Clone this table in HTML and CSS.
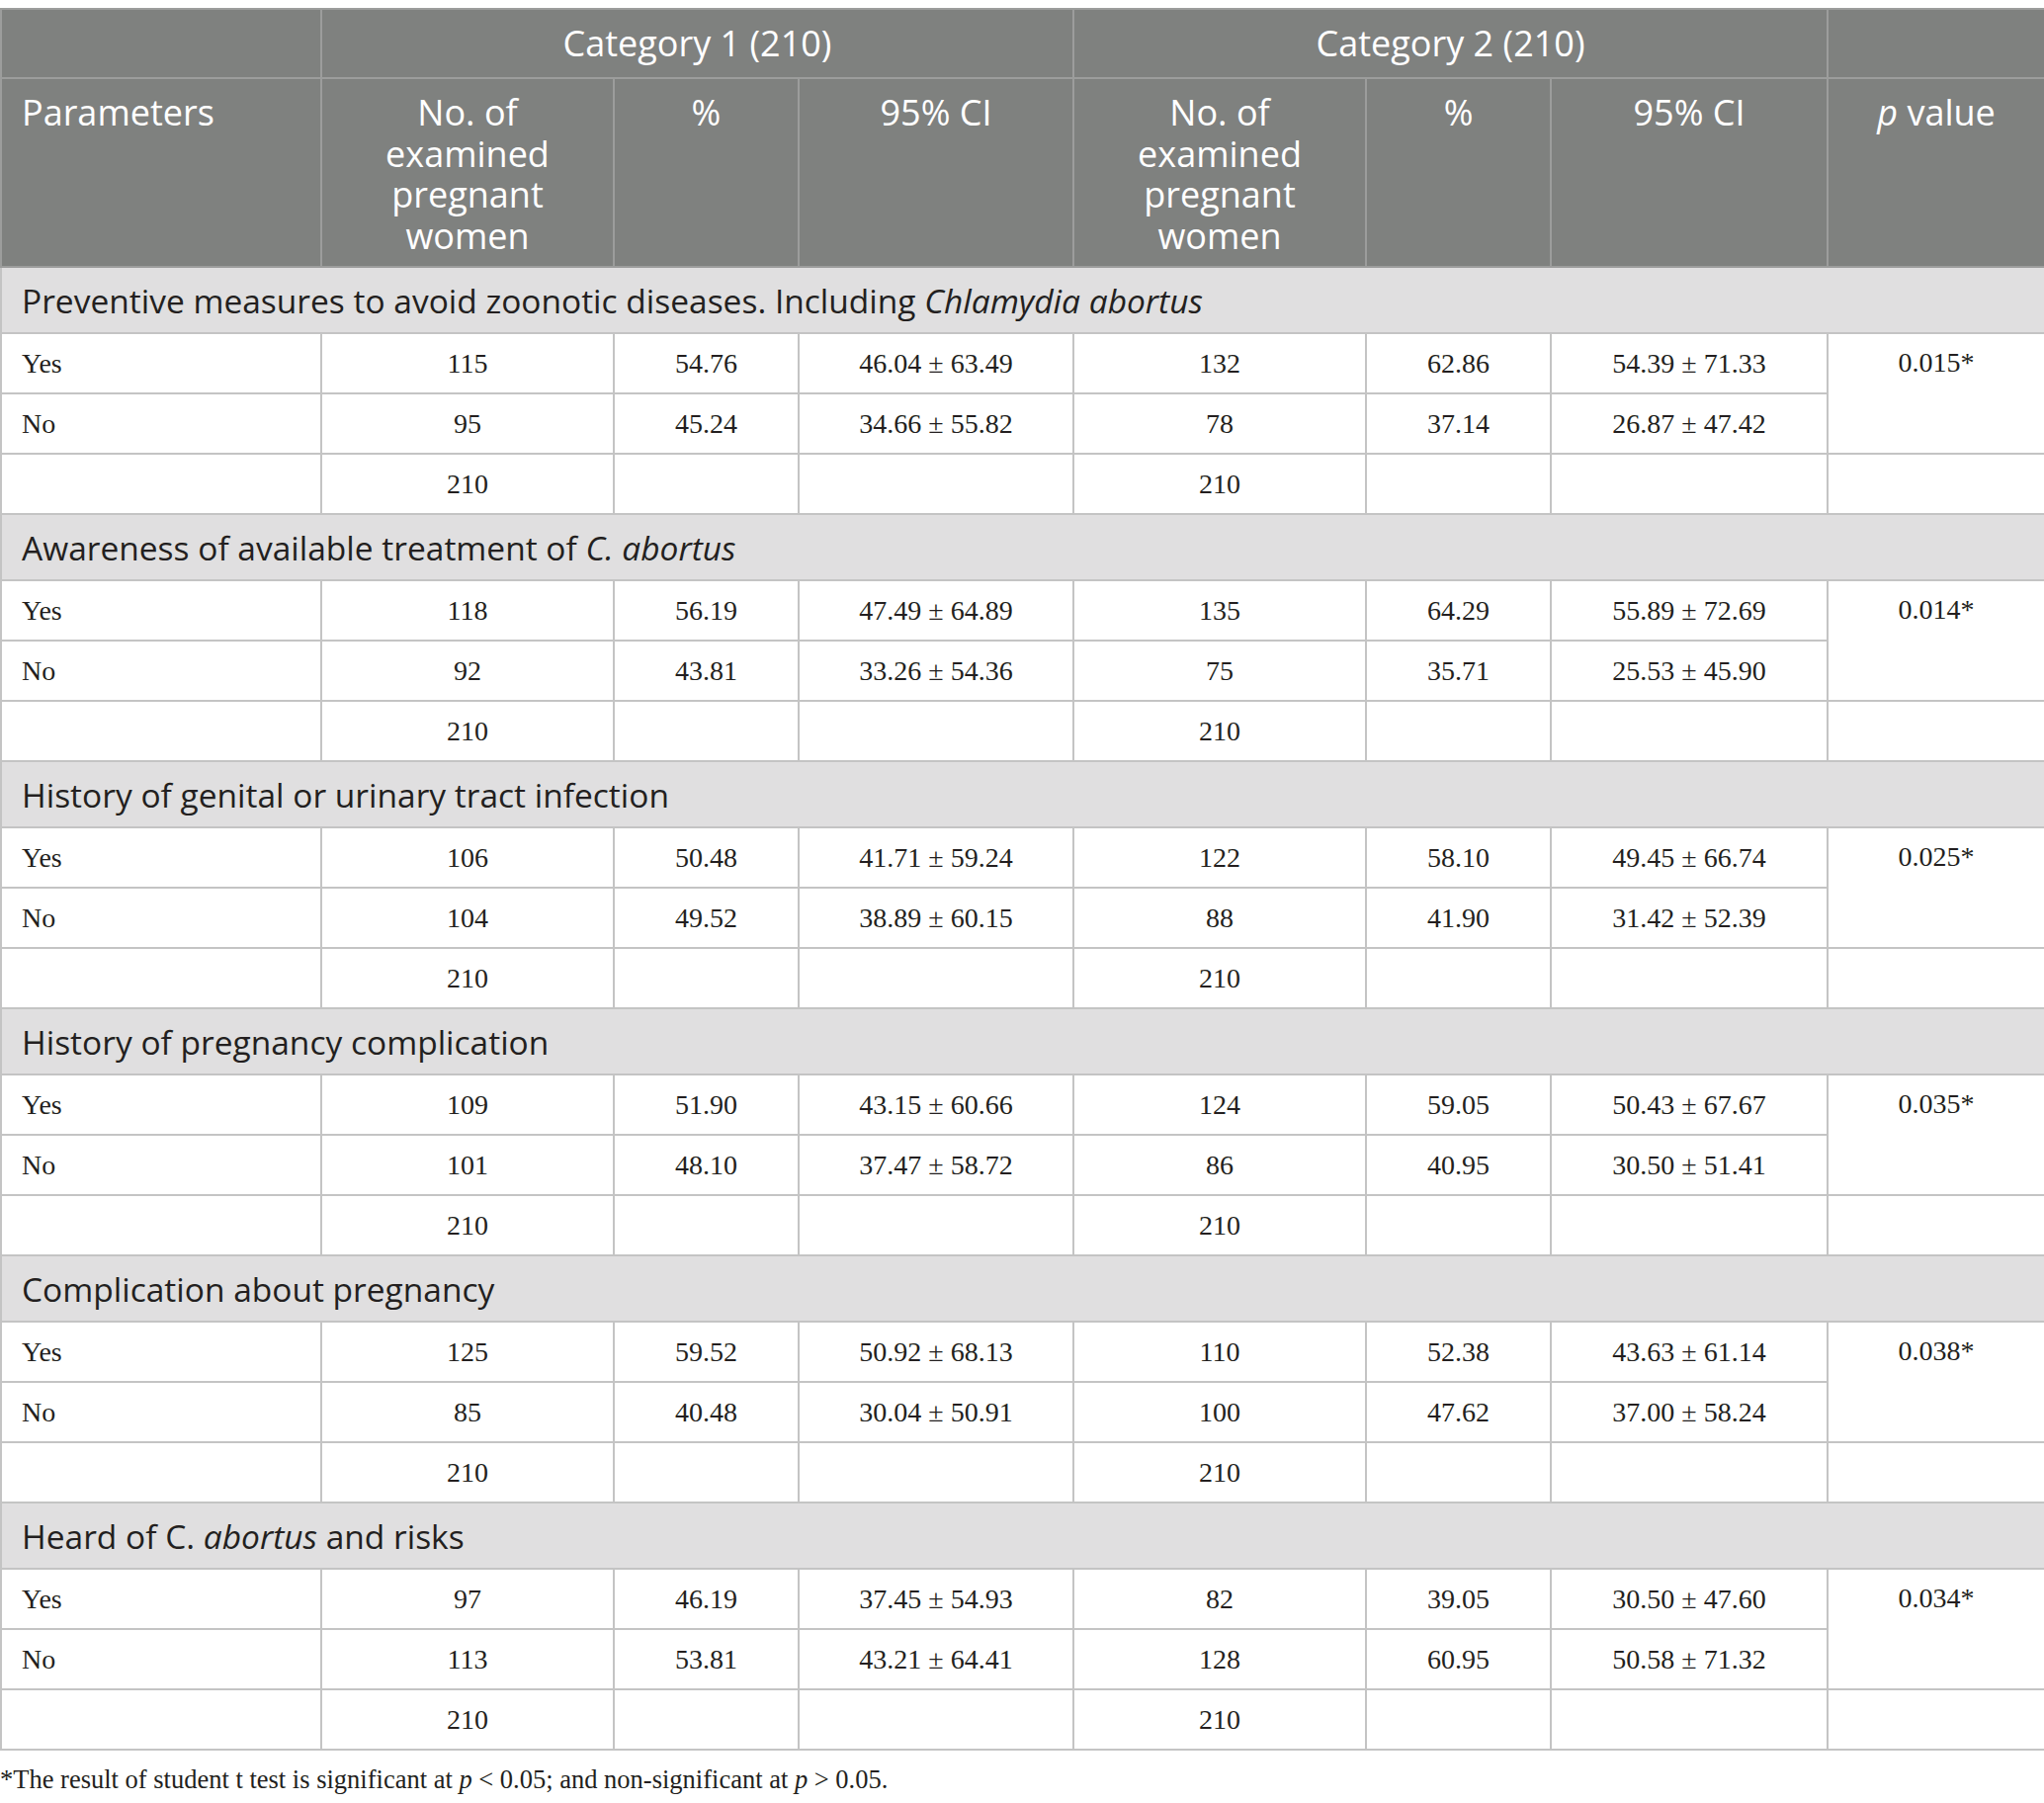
FILE: index.html
```html
<!DOCTYPE html>
<html lang="en">
<head>
  <meta charset="UTF-8" />
  <meta name="viewport" content="width=device-width, initial-scale=1.0"/>
  <title>Awareness of C. abortus among pregnant women</title>
  <link rel="stylesheet" href="styles.css">
</head>
<body>
  <table class="stats">
    <colgroup>
      <col style="width:324px">
      <col style="width:296px">
      <col style="width:187px">
      <col style="width:278px">
      <col style="width:296px">
      <col style="width:187px">
      <col style="width:280px">
      <col style="width:220px">
    </colgroup>
    <thead>
      <tr class="head-top">
        <th></th>
        <th colspan="3">Category 1 (210)</th>
        <th colspan="3">Category 2 (210)</th>
        <th></th>
      </tr>
      <tr class="head-sub">
        <th class="left">Parameters</th>
        <th>No. of examined pregnant women</th>
        <th>%</th>
        <th>95% CI</th>
        <th>No. of examined pregnant women</th>
        <th>%</th>
        <th>95% CI</th>
        <th><i>p</i> value</th>
      </tr>
    </thead>
    <tbody id="rows"></tbody>
  </table>

  <p class="note">*The result of student t test is significant at <i>p</i> &lt; 0.05; and non-significant at <i>p</i> &gt; 0.05.</p>

  <script>
    const groups = [
      { title: "Preventive measures to avoid zoonotic diseases. Including <i>Chlamydia abortus</i>", p: "0.015*",
        yes: ["115", "54.76", "46.04 ± 63.49", "132", "62.86", "54.39 ± 71.33"],
        no:  ["95", "45.24", "34.66 ± 55.82", "78", "37.14", "26.87 ± 47.42"] },
      { title: "Awareness of available treatment of <i>C. abortus</i>", p: "0.014*",
        yes: ["118", "56.19", "47.49 ± 64.89", "135", "64.29", "55.89 ± 72.69"],
        no:  ["92", "43.81", "33.26 ± 54.36", "75", "35.71", "25.53 ± 45.90"] },
      { title: "History of genital or urinary tract infection", p: "0.025*",
        yes: ["106", "50.48", "41.71 ± 59.24", "122", "58.10", "49.45 ± 66.74"],
        no:  ["104", "49.52", "38.89 ± 60.15", "88", "41.90", "31.42 ± 52.39"] },
      { title: "History of pregnancy complication", p: "0.035*",
        yes: ["109", "51.90", "43.15 ± 60.66", "124", "59.05", "50.43 ± 67.67"],
        no:  ["101", "48.10", "37.47 ± 58.72", "86", "40.95", "30.50 ± 51.41"] },
      { title: "Complication about pregnancy", p: "0.038*",
        yes: ["125", "59.52", "50.92 ± 68.13", "110", "52.38", "43.63 ± 61.14"],
        no:  ["85", "40.48", "30.04 ± 50.91", "100", "47.62", "37.00 ± 58.24"] },
      { title: "Heard of C. <i>abortus</i> and risks", p: "0.034*",
        yes: ["97", "46.19", "37.45 ± 54.93", "82", "39.05", "30.50 ± 47.60"],
        no:  ["113", "53.81", "43.21 ± 64.41", "128", "60.95", "50.58 ± 71.32"] }
    ];

    const body = document.getElementById("rows");

    groups.forEach(g => {
      let html = `<tr class="section"><td colspan="8">${g.title}</td></tr>`;
      html += `<tr><td class="left">Yes</td>${g.yes.map(v => `<td>${v}</td>`).join("")}<td class="pval" rowspan="2">${g.p}</td></tr>`;
      html += `<tr><td class="left">No</td>${g.no.map(v => `<td>${v}</td>`).join("")}</tr>`;
      html += `<tr><td></td><td>210</td><td></td><td></td><td>210</td><td></td><td></td><td></td></tr>`;
      body.insertAdjacentHTML("beforeend", html);
    });
  </script>
</body>
</html>
```

FILE: styles.css
```css
body {
  margin: 0;
  padding-top: 8px;
  background: #fff;
  font-family: "Liberation Serif", "Times New Roman", serif;
  color: #231f20;
}
.stats {
  width: 2068px;
  border-collapse: collapse;
  table-layout: fixed;
}
.stats th {
  background-color: #7f817f;
  color: #fff;
  font-family: "Open Sans", "Noto Sans", sans-serif;
  font-weight: normal;
  font-size: 36px;
  line-height: 41.5px;
  text-align: center;
  vertical-align: top;
  border: 2px solid #9c9d9c;
  padding: 0 18px;
}
.head-top th {
  height: 68px;
  vertical-align: middle;
}
.head-sub th {
  padding-top: 13px;
  padding-bottom: 10px;
}
.stats th.left,
.stats td.left {
  text-align: left;
  padding-left: 20px;
}
.stats td {
  border: 2px solid #c4c4c4;
  font-size: 28px;
  line-height: 30px;
  height: 59px;
  padding: 0 12px;
  text-align: center;
  vertical-align: middle;
}
.stats tr.section td {
  background-color: #e0dfe0;
  font-family: "Open Sans", "Noto Sans", sans-serif;
  font-size: 33.5px;
  text-align: left;
  padding-left: 20px;
  height: 65px;
}
.stats td.pval {
  vertical-align: top;
  padding-top: 14px;
}
.note {
  margin: 14px 0 0 0;
  font-size: 26.5px;
}
```
